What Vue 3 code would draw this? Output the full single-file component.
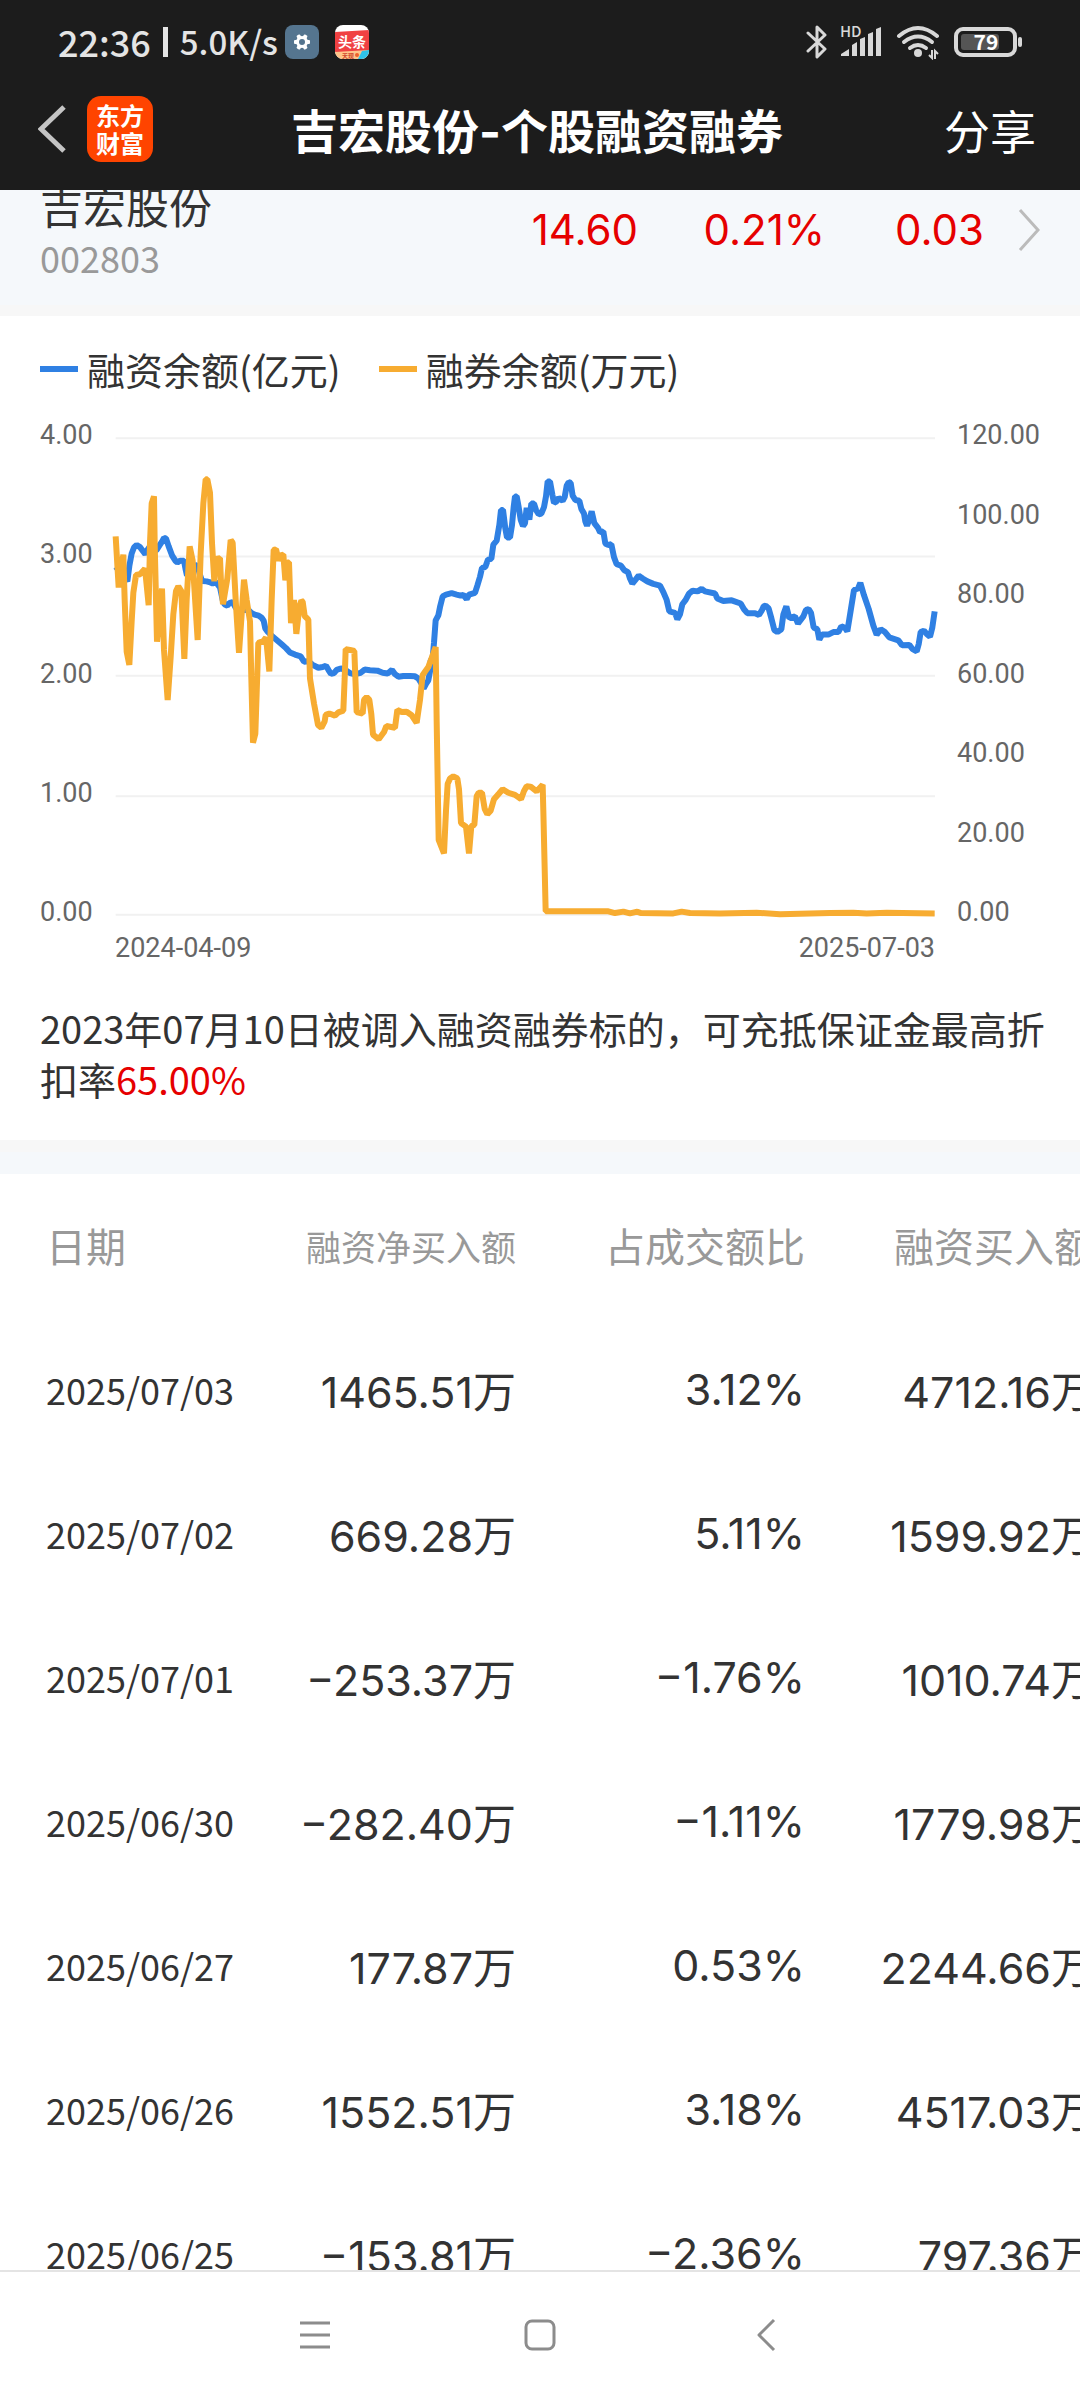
<script setup>
const leftTicks = ['4.00', '3.00', '2.00', '1.00', '0.00']
const rightTicks = ['120.00', '100.00', '80.00', '60.00', '40.00', '20.00', '0.00']
const gridLines = [107, 438, 772, 1110, 1442]

// Margin balance, plotted in chart units
const financing = `77,467 90,480 103,495 112,508 118,465 125,430 132,413 140,406 150,412 158,422 166,432
172,420 180,410 190,425 200,420 208,408 217,395 222,386 228,388 236,410 246,435 256,450 262,455 270,450
282,450 287,475 291,492 300,480 310,465 322,463 330,490 336,507 350,508 358,510 368,514 378,510 390,525
398,560 404,573 412,576 419,568 428,566 436,580 446,590 456,588 465,588 475,588 484,596 494,601 506,604
515,610 521,618 526,640 532,648 545,660 560,672 575,684 588,695 600,707 615,713 632,718 642,733 655,732
668,742 685,750 698,748 708,744 716,757 723,767 732,765 740,756 752,752 765,755 780,765 795,768 812,764
824,755 840,757 862,758 878,764 893,766 906,756 915,768 925,775 940,773 960,773 975,774 985,780 995,795
1001,808 1008,795 1015,785 1020,760 1022,730 1028,722 1032,680 1037,617 1045,603 1050,580 1058,550
1068,545 1085,541 1100,545 1112,548 1120,546 1130,558 1137,545 1155,540 1162,520 1170,495 1176,470
1186,468 1194,447 1204,445 1210,405 1220,394 1228,350 1233,308 1239,308 1246,360 1251,385 1260,385
1266,350 1271,300 1275,270 1280,270 1286,300 1292,335 1299,353 1305,345 1310,302 1318,335 1324,290
1332,290 1338,308 1346,320 1354,318 1362,300 1368,270 1373,228 1380,228 1387,265 1392,288 1400,284
1406,274 1418,282 1424,272 1430,240 1436,230 1442,232 1448,268 1456,280 1468,282 1474,305 1482,318
1486,340 1491,352 1498,335 1505,312 1513,345 1524,358 1530,370 1540,368 1546,402 1554,406 1564,404
1572,440 1580,460 1593,464 1603,477 1614,482 1620,500 1627,514 1635,505 1646,492 1658,500 1672,508
1690,515 1710,520 1720,538 1730,560 1738,592 1755,596 1762,614 1770,600 1777,572 1787,560 1797,542
1808,534 1823,536 1835,529 1845,536 1875,542 1882,556 1900,563 1925,561 1952,570 1962,586 1972,597
1995,597 2007,602 2015,590 2021,578 2027,576 2036,584 2044,611 2053,644 2062,650 2074,642 2080,601
2089,578 2098,611 2115,606 2124,626 2140,606 2148,588 2156,586 2163,596 2171,637 2182,642 2188,671
2196,657 2215,657 2230,650 2245,650 2254,634 2265,638 2272,648 2282,590 2292,532 2304,528 2311,512
2322,547 2336,585 2350,632 2360,657 2372,642 2385,650 2398,665 2425,673 2436,687 2458,686 2468,698
2480,704 2486,684 2492,650 2502,646 2510,655 2520,663 2527,637 2534,592`

// Short-selling balance, same units
const lending = `77,382 86,525 100,433 104,560 110,705 118,742 125,620 130,540 138,490 150,488 158,480
165,472 176,575 180,400 185,290 192,270 194,400 201,677 216,528 222,700 233,840 242,720 250,600 258,535
265,522 274,535 283,725 290,560 299,410 308,450 312,510 323,672 332,430 340,290 347,222 352,222 360,260
366,400 373,508 378,445 390,443 393,510 399,572 412,500 422,392 428,400 437,560 447,708 455,600 462,503
470,560 480,620 484,780 489,960 496,935 500,820 505,680 520,675 528,665 538,760 545,560 551,420 558,418
566,450 572,435 580,433 586,505 592,455 597,455 603,625 612,560 619,655 628,580 634,562 638,565 644,605
655,615 660,780 672,850 684,910 694,918 704,900 707,882 718,878 735,884 745,875 760,870 764,780 767,698
780,700 793,703 800,874 818,878 822,840 830,832 838,840 844,880 849,937 866,950 882,930 889,913 915,918
922,868 935,874 950,873 965,883 980,904 990,840 998,770 1015,748 1026,720 1037,692 1040,900 1046,1232
1062,1270 1068,1150 1073,1075 1080,1060 1090,1054 1102,1060 1107,1090 1113,1185 1128,1195 1137,1270
1144,1193 1153,1190 1160,1110 1166,1100 1176,1100 1184,1145 1192,1160 1202,1150 1212,1118 1227,1102
1238,1090 1255,1100 1275,1106 1293,1118 1302,1095 1310,1082 1322,1083 1340,1096 1358,1078 1360,1150
1367,1432 1555,1432 1575,1437 1600,1433 1620,1438 1642,1433 1652,1437 1750,1438 1775,1433 1800,1437
1890,1438 2000,1436 2070,1440 2220,1437 2290,1436 2330,1438 2390,1436 2534,1438`

const rows = [
  ['2025/07/03', '1465.51万', '3.12%', '4712.16万'],
  ['2025/07/02', '669.28万', '5.11%', '1599.92万'],
  ['2025/07/01', '−253.37万', '−1.76%', '1010.74万'],
  ['2025/06/30', '−282.40万', '−1.11%', '1779.98万'],
  ['2025/06/27', '177.87万', '0.53%', '2244.66万'],
  ['2025/06/26', '1552.51万', '3.18%', '4517.03万'],
  ['2025/06/25', '−153.81万', '−2.36%', '797.36万'],
]
</script>

<template>
  <div class="app">
    <header class="top">
      <div class="status">
        <span class="clock">22:36</span>
        <span class="bar"></span>
        <span class="speed">5.0K/s</span>
        <svg class="app-icon" viewBox="0 0 34 34" aria-hidden="true">
          <rect width="34" height="34" rx="8" fill="#55758f" />
          <g fill="#fff">
            <circle cx="17" cy="17" r="6" />
            <rect v-for="a in [30, 90, 150, 210, 270, 330]" :key="a" x="15" y="9" width="4" height="4" rx="1" :transform="`rotate(${a} 17 17)`" />
          </g>
          <circle cx="17" cy="17" r="3" fill="#55758f" />
        </svg>
        <svg class="app-icon news" viewBox="0 0 34 34" aria-hidden="true">
          <clipPath id="news-clip"><rect width="34" height="34" rx="8" /></clipPath>
          <g clip-path="url(#news-clip)">
            <rect width="34" height="34" fill="#fff" />
            <path d="M0 7L34 5V27H0Z" fill="#f04142" />
            <path d="M0 27L34 25V34H0Z" fill="#ffc58a" />
            <path d="M27 26L34 25V34H23Z" fill="#2fc3ea" />
            <circle cx="22" cy="30" r="2" fill="#f0602a" />
            <text x="17" y="22" text-anchor="middle" font-size="14" font-weight="700" fill="#fff">头条</text>
            <text x="13" y="33" text-anchor="middle" font-size="6" font-weight="700" fill="#d0442a">天现</text>
          </g>
        </svg>
        <span class="grow"></span>
        <svg class="bt" viewBox="0 0 22 36" aria-hidden="true">
          <path d="M2 9L19 25L11 33V3L19 11L2 27" fill="none" stroke="#d8d8d8" stroke-width="3" stroke-linejoin="round" stroke-linecap="round" />
        </svg>
        <svg class="signal" viewBox="0 0 42 36" aria-hidden="true">
          <text x="0" y="13" font-size="15" font-weight="500" fill="#d8d8d8">HD</text>
          <path d="M1 32V30L9 25V32ZM12 32V21L17 18V32ZM20 32V15L25 13V32ZM28 32V10L33 8V32ZM36 32V5L41 3V32Z" fill="#d8d8d8" />
        </svg>
        <svg class="wifi" viewBox="0 0 44 36" aria-hidden="true">
          <g fill="none" stroke="#d8d8d8" stroke-width="4" stroke-linecap="round">
            <path d="M3 12Q22 -4 41 12" />
            <path d="M8 18Q22 7 36 18" />
            <path d="M14 24Q22 18 30 24" />
          </g>
          <circle cx="22" cy="29" r="4" fill="#d8d8d8" />
          <path d="M36 26V34L33 31M39 35V27L42 30" fill="none" stroke="#d8d8d8" stroke-width="2" />
        </svg>
        <svg class="battery" viewBox="0 0 70 32" aria-hidden="true">
          <rect x="2" y="3" width="59" height="26" rx="7" fill="none" stroke="#d8d8d8" stroke-width="4" />
          <rect x="7" y="8" width="38" height="16" rx="3" fill="#555" />
          <rect x="64" y="11" width="4" height="10" rx="2" fill="#d8d8d8" />
          <text x="32" y="24" text-anchor="middle" font-size="21" font-weight="700" fill="#fff">79</text>
        </svg>
      </div>
      <div class="titlebar">
        <div class="side">
          <button class="icon-btn" type="button" aria-label="返回">
            <svg width="28" height="48" viewBox="0 0 28 48"><path d="M26 2L3 24L26 46" fill="none" stroke="#c4c4c4" stroke-width="5" /></svg>
          </button>
          <a class="logo" href="#"><span>东方</span><span>财富</span></a>
        </div>
        <h1>吉宏股份-个股融资融券</h1>
        <div class="side end"><button class="share" type="button">分享</button></div>
      </div>
    </header>

    <main class="content">
      <section class="stock-wrap">
        <a class="stock" href="#">
          <span class="ident"><span class="name">吉宏股份</span><span class="code">002803</span></span>
          <span class="quote">14.60</span>
          <span class="quote pct">0.21%</span>
          <span class="quote diff">0.03</span>
          <svg class="more" viewBox="0 0 22 44" aria-hidden="true"><path d="M2 2L20 22L2 42" fill="none" stroke="#bbb" stroke-width="3" /></svg>
        </a>
      </section>

      <section class="chart-card">
        <div class="legend">
          <span class="key"><i class="blue"></i>融资余额(亿元)</span>
          <span class="key"><i class="gold"></i>融券余额(万元)</span>
        </div>
        <div class="chart">
          <div class="axis left"><span v-for="t in leftTicks" :key="t">{{ t }}</span></div>
          <svg class="plot" viewBox="60 56 2490 1420" preserveAspectRatio="none" role="img" aria-label="融资余额与融券余额走势">
            <line v-for="y in gridLines" :key="y" x1="77" x2="2535" :y1="y" :y2="y" class="grid" />
            <polyline :points="financing" class="line financing" />
            <polyline :points="lending" class="line lending" />
          </svg>
          <div class="axis right"><span v-for="t in rightTicks" :key="t">{{ t }}</span></div>
        </div>
        <div class="dates"><span>2024-04-09</span><span>2025-07-03</span></div>
        <p class="note">2023年07月10日被调入融资融券标的，可充抵保证金最高折扣率<em>65.00%</em></p>
      </section>

      <div class="divider"></div>

      <section class="table-wrap">
        <table>
          <colgroup><col class="c-date" /><col class="c-num" /><col class="c-num" /><col class="c-num" /></colgroup>
          <thead>
            <tr>
              <th scope="col">日期</th>
              <th scope="col" class="small">融资净买入额</th>
              <th scope="col">占成交额比</th>
              <th scope="col">融资买入额</th>
            </tr>
          </thead>
          <tbody>
            <tr v-for="row in rows" :key="row[0]">
              <td v-for="cell in row" :key="cell">{{ cell }}</td>
            </tr>
          </tbody>
        </table>
      </section>
    </main>

    <nav class="sysnav">
      <button type="button" aria-label="最近任务">
        <svg width="34" height="34" viewBox="0 0 34 34"><path d="M2 5H32M2 17H32M2 29H32" stroke="#8c8c8c" stroke-width="3" /></svg>
      </button>
      <button type="button" aria-label="主屏幕">
        <svg width="34" height="34" viewBox="0 0 34 34"><rect x="3" y="3" width="28" height="28" rx="6" fill="none" stroke="#8c8c8c" stroke-width="3" /></svg>
      </button>
      <button type="button" aria-label="返回上一级">
        <svg width="34" height="34" viewBox="0 0 34 34"><path d="M26 2L11 17L26 32" fill="none" stroke="#8c8c8c" stroke-width="3" stroke-linejoin="round" /></svg>
      </button>
    </nav>
  </div>
</template>

<style>
body {
  margin: 0;
  background: #fff;
}
</style>

<style scoped>
* {
  box-sizing: border-box;
}
.app {
  display: flex;
  flex-direction: column;
  height: 100vh;
  overflow: hidden;
  font-family: "Noto Sans CJK SC", sans-serif;
  color: #333;
}
button {
  border: 0;
  padding: 0;
  background: none;
  font: inherit;
  color: inherit;
}
a {
  color: inherit;
  text-decoration: none;
}
svg {
  display: block;
  flex: none;
}
.top {
  flex: none;
  background: #1c1c1c;
  color: #fff;
}
.status {
  display: flex;
  align-items: center;
  height: 84px;
  padding: 0 56px 0 58px;
  color: #e4e4e4;
  font-weight: 500;
}
.clock,
.speed {
  padding-bottom: 2px;
}
.clock {
  font-size: 36px;
}
.bar {
  width: 5px;
  height: 30px;
  margin: 0 12px;
  background: #e4e4e4;
}
.speed {
  font-size: 33px;
}
.app-icon {
  width: 34px;
  height: 34px;
  margin-left: 7px;
}
.news {
  margin-left: 16px;
}
.grow {
  flex: 1;
}
.bt {
  width: 22px;
  height: 36px;
}
.signal {
  width: 42px;
  height: 36px;
  margin-left: 12px;
}
.wifi {
  width: 44px;
  height: 36px;
  margin-left: 14px;
}
.battery {
  width: 70px;
  height: 32px;
  margin-left: 14px;
}
.titlebar {
  display: flex;
  align-items: center;
  height: 90px;
  margin-bottom: 16px;
  padding: 0 44px 0 38px;
}
.side {
  display: flex;
  flex: 1;
  align-items: center;
  gap: 21px;
}
.end {
  justify-content: flex-end;
}
.logo {
  display: flex;
  flex-direction: column;
  align-items: center;
  justify-content: center;
  width: 66px;
  height: 66px;
  border-radius: 14px;
  background: #ff4400;
  font-size: 24px;
  font-weight: 700;
  line-height: 28px;
}
h1 {
  margin: 0;
  padding-top: 6px;
  font-family: Inter, "Noto Sans CJK SC", sans-serif;
  font-size: 47px;
  font-weight: 700;
  line-height: 60px;
}
.share {
  font-size: 46px;
  line-height: 60px;
}
.content {
  flex: 1;
  min-height: 0;
  overflow: hidden;
}
.stock-wrap {
  overflow: hidden;
  border-bottom: 11px solid #f7f7f7;
  background: #f5f8fb;
}
.stock {
  display: flex;
  align-items: flex-start;
  margin-top: -11px;
  padding: 0 40px 22px;
}
.ident {
  display: flex;
  flex: 1;
  flex-direction: column;
  line-height: 52px;
}
.name {
  font-size: 43px;
}
.code {
  color: #999;
  font-size: 36px;
}
.quote {
  color: #e60000;
  font-family: Inter, "Noto Sans CJK SC", sans-serif;
  font-size: 42px;
  line-height: 102px;
  text-align: right;
}
.pct {
  width: 187px;
}
.diff {
  width: 159px;
}
.more {
  width: 22px;
  height: 44px;
  margin: 29px 0 0 34px;
}
.chart-card {
  padding: 28px 32px 36px 40px;
}
.legend {
  display: flex;
  gap: 38px;
  font-size: 38px;
  line-height: 50px;
}
.key {
  display: flex;
  align-items: center;
  gap: 9px;
}
.key i {
  width: 38px;
  height: 6px;
}
.blue {
  background: #2f80e3;
}
.gold {
  background: #f7ac31;
}
.chart {
  display: flex;
  height: 507px;
  margin-top: 26px;
}
.axis {
  display: flex;
  flex: none;
  flex-direction: column;
  justify-content: space-between;
  color: #666;
  font-family: Roboto, sans-serif;
  font-size: 27px;
  line-height: 30px;
}
.left {
  width: 70px;
}
.right {
  width: 108px;
  padding-left: 17px;
}
.plot {
  flex: 1;
  min-width: 0;
  height: 507px;
}
.grid {
  stroke: #f1f1f1;
  stroke-width: 2;
  vector-effect: non-scaling-stroke;
}
.line {
  fill: none;
  stroke-width: 6;
  stroke-linejoin: bevel;
  vector-effect: non-scaling-stroke;
}
.financing {
  stroke: #2f80e3;
}
.lending {
  stroke: #f7ac31;
}
.dates {
  display: flex;
  justify-content: space-between;
  margin: 6px 113px 0 75px;
  color: #666;
  font-family: Roboto, sans-serif;
  font-size: 27px;
  line-height: 30px;
}
.note {
  margin: 39px 0 0;
  font-size: 38px;
  line-height: 51px;
}
.note em {
  color: #e60000;
  font-style: normal;
}
.divider {
  height: 34px;
  border-top: 12px solid #f7f7f7;
  background: #f5f8fb;
}
.table-wrap {
  overflow: hidden;
}
table {
  width: 1094px;
  border-collapse: collapse;
  table-layout: fixed;
}
.c-date {
  width: 227px;
}
.c-num {
  width: 289px;
}
th,
td {
  height: 144px;
  padding: 0 0 2px;
  text-align: right;
  white-space: nowrap;
}
th {
  color: #999;
  font-size: 40px;
  font-weight: 400;
}
.small {
  font-size: 35px;
}
td {
  font-family: Inter, "Noto Sans CJK SC", sans-serif;
  font-size: 43px;
}
th:first-child,
td:first-child {
  padding-left: 46px;
  text-align: left;
}
td:first-child {
  font-family: "Noto Sans CJK SC", sans-serif;
  font-size: 36px;
}
.sysnav {
  display: flex;
  flex: none;
  justify-content: center;
  height: 130px;
  padding-bottom: 2px;
  border-top: 2px solid #e4e4e4;
  background: #fff;
}
.sysnav button {
  display: flex;
  align-items: center;
  justify-content: center;
  width: 225px;
}
</style>
